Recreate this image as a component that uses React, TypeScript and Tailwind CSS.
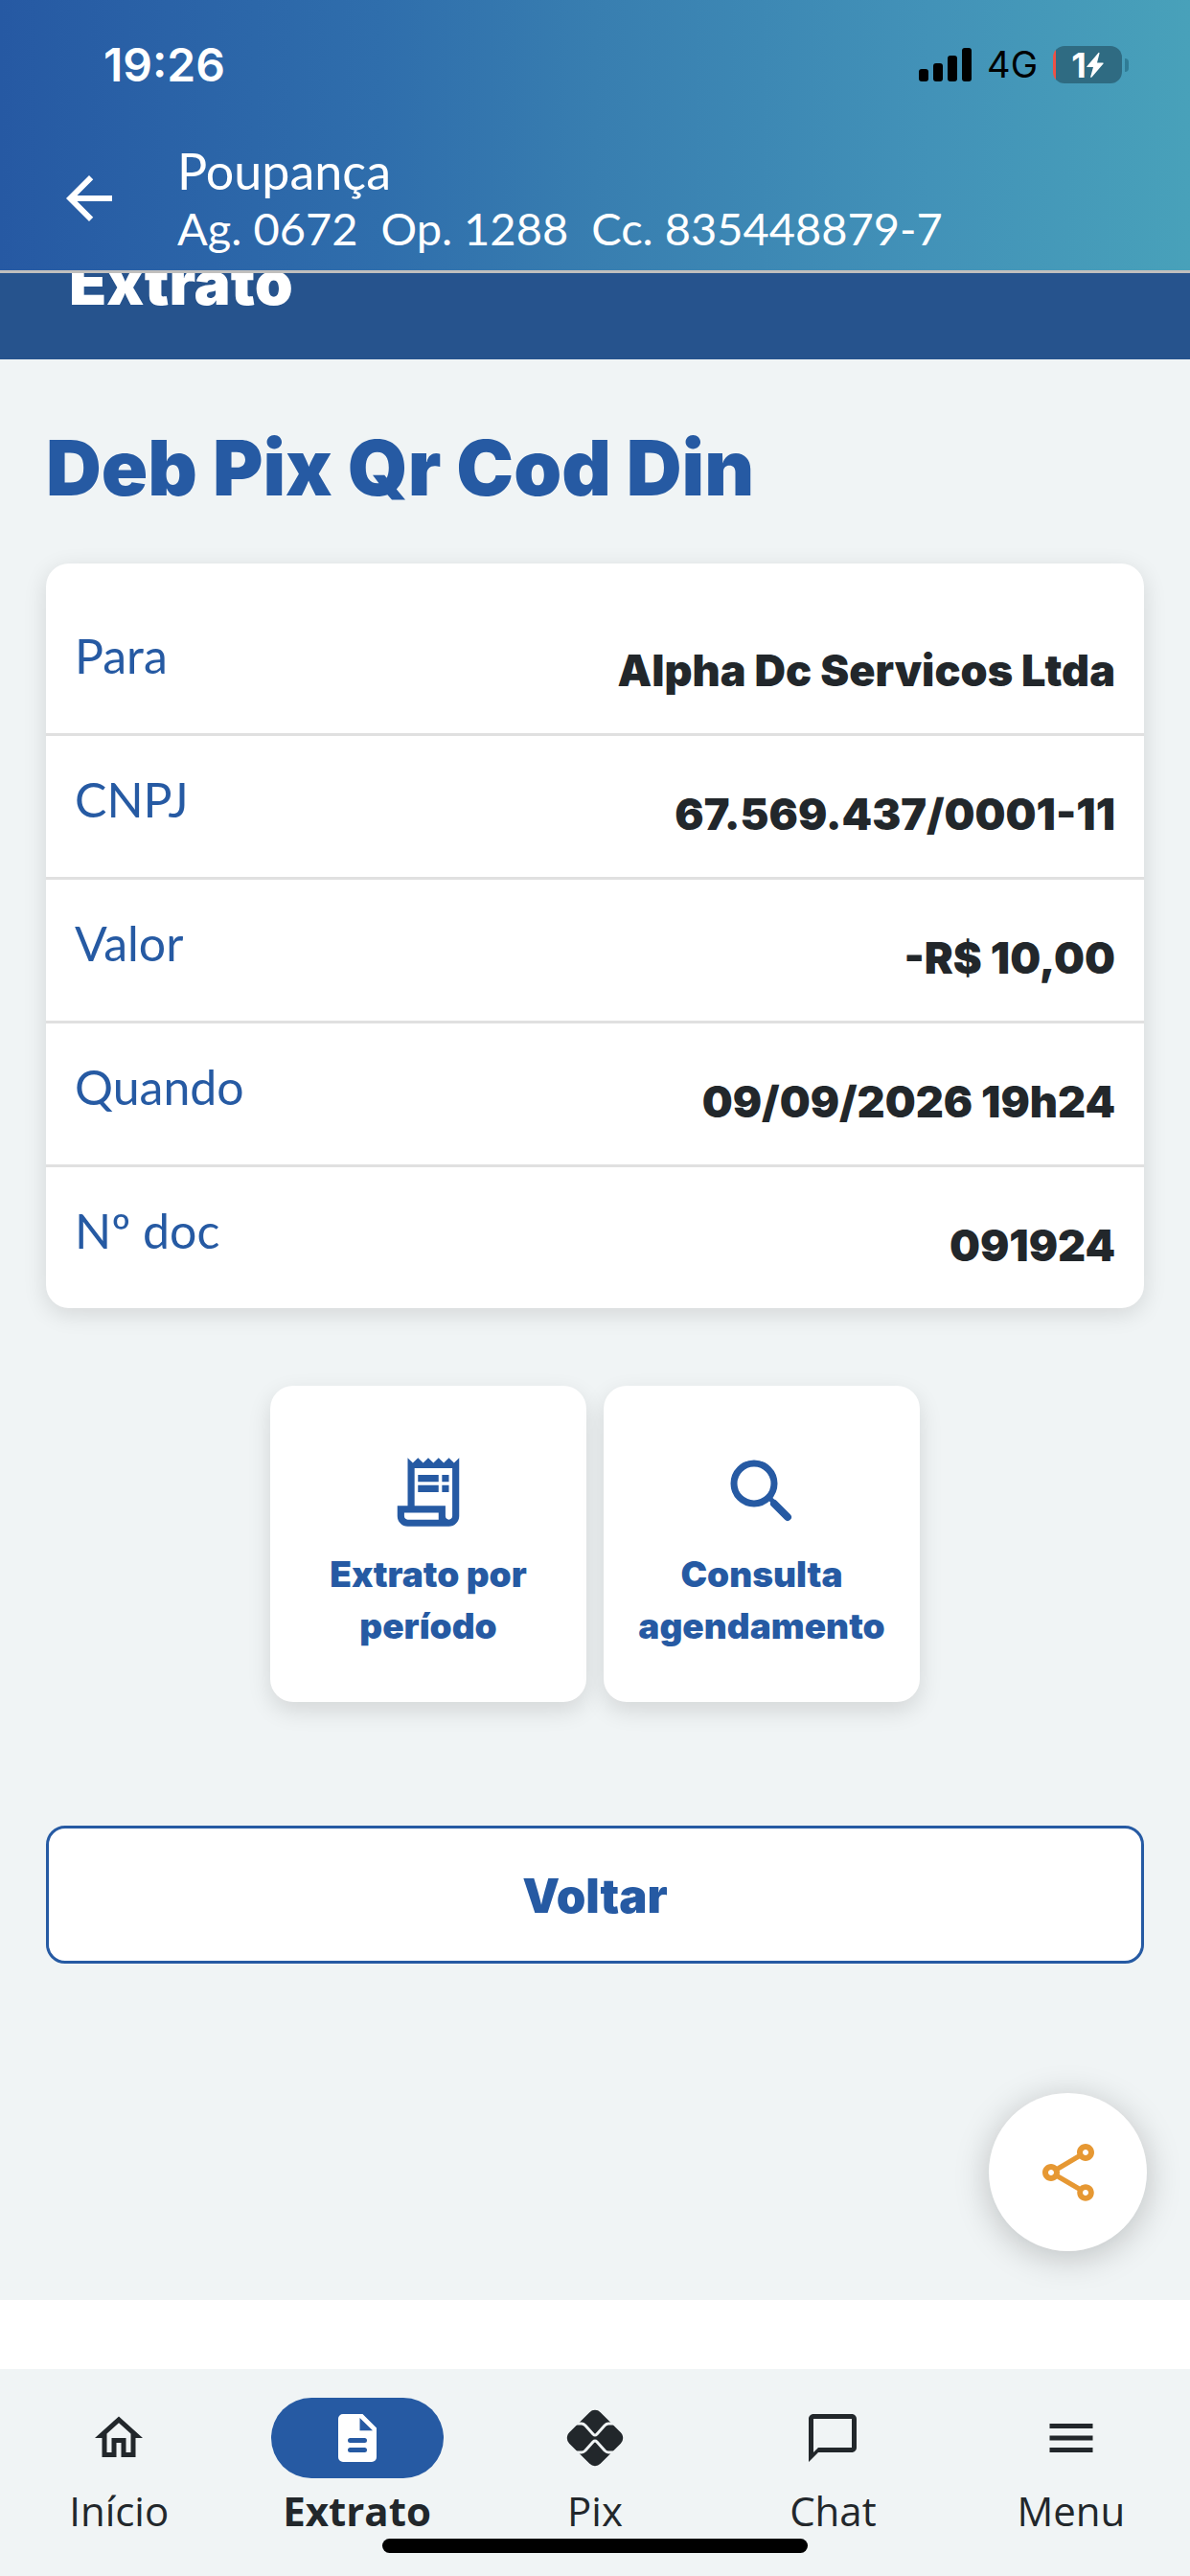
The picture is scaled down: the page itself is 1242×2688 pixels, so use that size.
import React, { useState } from 'react';
import { MdArrowBack, MdMenu, MdOutlineChatBubbleOutline, MdOutlineHome, MdOutlineShare } from 'react-icons/md';

interface DetailRow {
  label: string;
  value: string;
}

interface NavItem {
  id: string;
  label: string;
  icon: React.ReactNode;
}

const details: DetailRow[] = [
  { label: 'Para', value: 'Alpha Dc Servicos Ltda' },
  { label: 'CNPJ', value: '67.569.437/0001-11' },
  { label: 'Valor', value: '-R$ 10,00' },
  { label: 'Quando', value: '09/09/2026 19h24' },
  { label: 'Nº doc', value: '091924' },
];

const ReceiptIcon = () => (
  <svg viewBox="0 0 24 24" className="h-[86px] w-[86px]" fill="currentColor">
    <path d="M19.5 3.5 18 2l-1.5 1.5L15 2l-1.5 1.5L12 2l-1.5 1.5L9 2 7.5 3.5 6 2v14H3v3c0 1.66 1.34 3 3 3h12c1.66 0 3-1.34 3-3V2l-1.5 1.5zM15 20H6c-.55 0-1-.45-1-1v-1h10v2zm4-1c0 .55-.45 1-1 1s-1-.45-1-1v-3H8V5h11v14z" />
    <path d="M9 7h6v2H9zM16 7h2v2h-2zM9 10h6v2H9zM16 10h2v2h-2z" />
  </svg>
);

const SearchIcon = () => (
  <svg viewBox="0 0 86 86" className="h-[86px] w-[86px]" fill="none" stroke="currentColor">
    <circle cx="35" cy="34" r="21" strokeWidth="7" />
    <path d="M50 48 55 53" strokeWidth="5" />
    <path d="M56 55 70 69" strokeWidth="8" strokeLinecap="round" />
  </svg>
);

const DocIcon = () => (
  <svg viewBox="0 0 24 24" className="h-[60px] w-[60px]" fill="currentColor">
    <path
      fillRule="evenodd"
      d="M6 2h8.2L20 7.8V20a2 2 0 0 1-2 2H6a2 2 0 0 1-2-2V4a2 2 0 0 1 2-2zm7 1.6v5.3h5.4zM9 12a1 1 0 0 0 0 2h6a1 1 0 0 0 0-2zm0 4a1 1 0 0 0 0 2h6a1 1 0 0 0 0-2z"
    />
  </svg>
);

const PixIcon = () => (
  <svg viewBox="0 0 60 60" className="h-[60px] w-[60px]">
    <rect x="7" y="7" width="46" height="46" rx="8" fill="#22272b" transform="rotate(45 30 30)" />
    <g fill="none" stroke="#f0f4f5" strokeWidth="3">
      <path d="M10 15h6q2 0 4 2l8 9q2 2 4 0l8-9q2-2 4-2h6" />
      <path d="M10 45h6q2 0 4-2l8-9q2-2 4 0l8 9q2 2 4 2h6" />
    </g>
  </svg>
);

const navItems: NavItem[] = [
  { id: 'inicio', label: 'Início', icon: <MdOutlineHome size={60} /> },
  { id: 'extrato', label: 'Extrato', icon: <DocIcon /> },
  { id: 'pix', label: 'Pix', icon: <PixIcon /> },
  { id: 'chat', label: 'Chat', icon: <MdOutlineChatBubbleOutline size={60} /> },
  { id: 'menu', label: 'Menu', icon: <MdMenu size={60} /> },
];

const StatusBar = () => (
  <div className="flex h-[135px] items-center justify-between pl-[108px] pr-16 font-[Inter,sans-serif]">
    <span className="text-5xl font-semibold text-white">19:26</span>
    <div className="flex items-center">
      <svg viewBox="0 0 55 35" className="h-[35px] w-[55px]">
        <rect x="0" y="22" width="10" height="13" rx="3" />
        <rect x="15" y="16" width="10" height="19" rx="3" />
        <rect x="30" y="8" width="10" height="27" rx="3" />
        <rect x="45" y="0" width="10" height="35" rx="3" />
      </svg>
      <span className="ml-4 mr-4 text-[38px] text-black">4G</span>
      <div className="flex h-[39px] w-[72px] items-center justify-center rounded-xl bg-[linear-gradient(90deg,#ef5145_3px,#2f6b82_3px)] text-white">
        <span className="text-[36px] font-bold leading-none">1</span>
        <svg viewBox="0 0 18 26" className="h-[28px] w-[18px]" fill="currentColor">
          <path d="M12.500 0 .4 14.200q-.6.9.5.9H7L4.200 25q0 1.500 1.300.6L17.500 11.600q.7-1-.5-1.100H11L13.500.8q0-1.300-1-.8z" />
        </svg>
      </div>
      <div className="ml-[3px] h-[14px] w-1 rounded-r-full bg-[#2f7c96]" />
    </div>
  </div>
);

const App: React.FC = () => {
  const [active, setActive] = useState('extrato');

  return (
    <div className="flex min-h-screen flex-col bg-white font-[Lato,sans-serif] text-[#22272b]">
      <header className="h-[285px] border-b-[3px] border-[#c0bfbe] bg-[linear-gradient(90deg,#2659a3_0%,#2f6eac_32%,#387eb0_50%,#4292b8_78%,#48a1ba_100%)]">
        <StatusBar />
        <div className="flex items-start pl-[57px] text-white">
          <button type="button" aria-label="Voltar para a tela anterior" className="mt-9">
            <MdArrowBack size={72} />
          </button>
          <div className="ml-14 mt-[13px]">
            <p className="text-[52px] leading-[60px]">Poupança</p>
            <p className="whitespace-pre text-[47px] leading-[60px]">Ag. 0672  Op. 1288  Cc. 835448879-7</p>
          </div>
        </div>
      </header>

      {/* page title, partly scrolled under the header */}
      <div className="flex h-[90px] items-start overflow-hidden bg-[#26538d] px-[72px] font-[Inter,sans-serif] text-white">
        <h1 className="-mt-[30px] text-[64px] font-black leading-[80px]">Extrato</h1>
      </div>

      <main className="flex flex-1 flex-col bg-[#f0f4f5] px-12 pt-[63px]">
        <h2 className="font-[Inter,sans-serif] text-[80px] font-black leading-[100px] text-[#265aa3]">Deb Pix Qr Cod Din</h2>

        <dl className="mt-[50px] rounded-3xl bg-white pt-[30px] shadow-[0_6px_24px_rgba(0,0,0,0.12)]">
          {details.map(row => (
            <div key={row.label} className="flex h-[150px] justify-between border-b-[3px] border-[#e0e0e0] px-[30px] last:h-[147px] last:border-b-0">
              <dt className="pt-9 text-[50px] leading-[60px] text-[#265aa3]">{row.label}</dt>
              <dd className="pt-[52px] font-[Inter,sans-serif] text-[45px] font-black leading-[60px]">{row.value}</dd>
            </div>
          ))}
        </dl>

        <div className="mt-[81px] flex justify-center gap-[18px] font-[Inter,sans-serif] text-[37px] font-black leading-[54px] text-[#265aa3]">
          <button type="button" className="flex h-[330px] w-[330px] flex-col items-center rounded-3xl bg-white px-6 pt-[68px] shadow-[0_9px_24px_rgba(0,0,0,0.12)]">
            <ReceiptIcon />
            <span className="mt-4">Extrato por<br />período</span>
          </button>
          <button type="button" className="flex h-[330px] w-[330px] flex-col items-center rounded-3xl bg-white px-6 pt-[68px] shadow-[0_9px_24px_rgba(0,0,0,0.12)]">
            <SearchIcon />
            <span className="mt-4">Consulta<br />agendamento</span>
          </button>
        </div>

        <button type="button" className="mt-[129px] h-36 w-full rounded-[20px] border-[3px] border-[#265aa3] bg-white pt-1 font-[Inter,sans-serif] text-[49px] font-black text-[#265aa3]">
          Voltar
        </button>

        <button
          type="button"
          aria-label="Compartilhar"
          className="-mr-[3px] mt-[135px] flex h-[165px] w-[165px] items-center justify-center self-end rounded-full bg-white text-[#e69833] shadow-[0_6px_36px_rgba(0,0,0,0.22)]"
        >
          <MdOutlineShare size={72} />
        </button>
      </main>

      <nav className="relative mt-[72px] flex h-[216px] bg-[#f0f4f5] pt-[30px] font-['Open_Sans',sans-serif]">
        {navItems.map(item => (
          <button
            key={item.id}
            type="button"
            onClick={() => setActive(item.id)}
            className="flex flex-1 flex-col items-center"
          >
            <span className={`flex h-[84px] w-[180px] items-center justify-center rounded-full ${active === item.id ? 'bg-[#265aa3] text-white' : ''}`}>
              {item.icon}
            </span>
            <span className={`mt-1 text-[42px] leading-[60px] ${active === item.id ? 'font-bold' : ''}`}>{item.label}</span>
          </button>
        ))}
        <div className="absolute bottom-6 left-1/2 h-[15px] w-[444px] -translate-x-1/2 rounded-full bg-black" />
      </nav>
    </div>
  );
};

export default App;
